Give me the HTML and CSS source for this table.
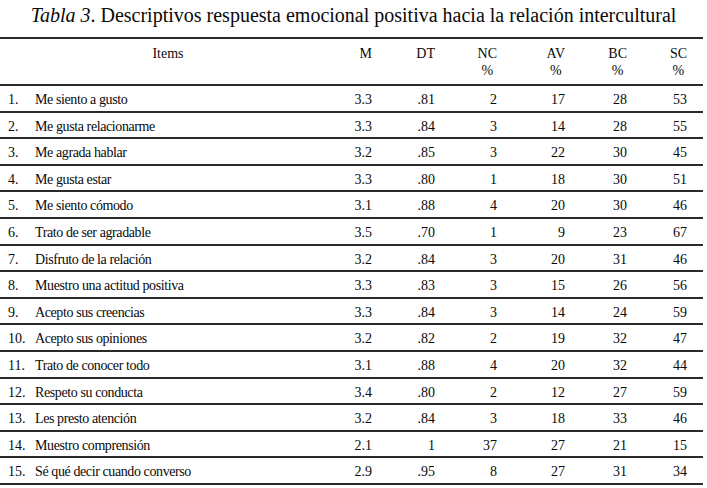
FILE: index.html
```html
<!DOCTYPE html>
<html lang="es">
<head>
<meta charset="utf-8">
<title>Tabla 3</title>
<link rel="stylesheet" href="styles.css">
</head>
<body>
<div class="page">
  <h1 class="caption"><em>Tabla 3</em>. Descriptivos respuesta emocional positiva hacia la relación intercultural</h1>
  <div class="table">
    <div class="row head">
      <div class="item-head">Items</div>
      <div class="num"><span class="h">M</span></div>
      <div class="num"><span class="h">DT</span></div>
      <div class="num"><span class="h">NC<br>%</span></div>
      <div class="num"><span class="h">AV<br>%</span></div>
      <div class="num"><span class="h">BC<br>%</span></div>
      <div class="num"><span class="h">SC<br>%</span></div>
    </div>
    <div class="row"><div class="item"><span class="n">1.</span>Me siento a gusto</div><div class="num">3.3</div><div class="num">.81</div><div class="num">2</div><div class="num">17</div><div class="num">28</div><div class="num">53</div></div>
    <div class="row"><div class="item"><span class="n">2.</span>Me gusta relacionarme</div><div class="num">3.3</div><div class="num">.84</div><div class="num">3</div><div class="num">14</div><div class="num">28</div><div class="num">55</div></div>
    <div class="row"><div class="item"><span class="n">3.</span>Me agrada hablar</div><div class="num">3.2</div><div class="num">.85</div><div class="num">3</div><div class="num">22</div><div class="num">30</div><div class="num">45</div></div>
    <div class="row"><div class="item"><span class="n">4.</span>Me gusta estar</div><div class="num">3.3</div><div class="num">.80</div><div class="num">1</div><div class="num">18</div><div class="num">30</div><div class="num">51</div></div>
    <div class="row"><div class="item"><span class="n">5.</span>Me siento cómodo</div><div class="num">3.1</div><div class="num">.88</div><div class="num">4</div><div class="num">20</div><div class="num">30</div><div class="num">46</div></div>
    <div class="row"><div class="item"><span class="n">6.</span>Trato de ser agradable</div><div class="num">3.5</div><div class="num">.70</div><div class="num">1</div><div class="num">9</div><div class="num">23</div><div class="num">67</div></div>
    <div class="row"><div class="item"><span class="n">7.</span>Disfruto de la relación</div><div class="num">3.2</div><div class="num">.84</div><div class="num">3</div><div class="num">20</div><div class="num">31</div><div class="num">46</div></div>
    <div class="row"><div class="item"><span class="n">8.</span>Muestro una actitud positiva</div><div class="num">3.3</div><div class="num">.83</div><div class="num">3</div><div class="num">15</div><div class="num">26</div><div class="num">56</div></div>
    <div class="row"><div class="item"><span class="n">9.</span>Acepto sus creencias</div><div class="num">3.3</div><div class="num">.84</div><div class="num">3</div><div class="num">14</div><div class="num">24</div><div class="num">59</div></div>
    <div class="row"><div class="item"><span class="n">10.</span>Acepto sus opiniones</div><div class="num">3.2</div><div class="num">.82</div><div class="num">2</div><div class="num">19</div><div class="num">32</div><div class="num">47</div></div>
    <div class="row"><div class="item"><span class="n">11.</span>Trato de conocer todo</div><div class="num">3.1</div><div class="num">.88</div><div class="num">4</div><div class="num">20</div><div class="num">32</div><div class="num">44</div></div>
    <div class="row"><div class="item"><span class="n">12.</span>Respeto su conducta</div><div class="num">3.4</div><div class="num">.80</div><div class="num">2</div><div class="num">12</div><div class="num">27</div><div class="num">59</div></div>
    <div class="row"><div class="item"><span class="n">13.</span>Les presto atención</div><div class="num">3.2</div><div class="num">.84</div><div class="num">3</div><div class="num">18</div><div class="num">33</div><div class="num">46</div></div>
    <div class="row"><div class="item"><span class="n">14.</span>Muestro comprensión</div><div class="num">2.1</div><div class="num">1</div><div class="num">37</div><div class="num">27</div><div class="num">21</div><div class="num">15</div></div>
    <div class="row"><div class="item"><span class="n">15.</span>Sé qué decir cuando converso</div><div class="num">2.9</div><div class="num">.95</div><div class="num">8</div><div class="num">27</div><div class="num">31</div><div class="num">34</div></div>
  </div>
</div>
</body>
</html>
```
FILE: styles.css
```css
html, body {
  margin: 0;
  padding: 0;
  background: #ffffff;
}
body {
  font-family: "Liberation Serif", "Times New Roman", serif;
  color: #0a0a0a;
}
.page {
  width: 707px;
}
.caption {
  margin: 0;
  padding-top: 3px;
  height: 37px;
  box-sizing: border-box;
  text-align: center;
  font-weight: normal;
  font-size: 20px;
  line-height: 24px;
}
.caption em {
  font-style: italic;
}
.table {
  width: 703px;
  border-top: 2px solid #2a2a2a;
}
.row {
  display: grid;
  grid-template-columns: 310px 62px 63px 62px 68px 62px 60px 16px;
  height: 24.6px;
  border-bottom: 2px solid #2a2a2a;
  font-size: 14px;
  line-height: 20px;
  align-items: start;
}
.row > div {
  padding-top: 4px;
}
.row.head {
  height: 45px;
  line-height: 17px;
}
.item-head {
  padding-left: 58px;
  width: 220px;
  text-align: center;
}
.row.head > div {
  padding-top: 6px;
}
.item {
  padding-left: 8px;
  letter-spacing: -0.4px;
  white-space: nowrap;
}
.n {
  display: inline-block;
  width: 27px;
  letter-spacing: 0;
}
.num {
  text-align: right;
}
.h {
  display: inline-block;
  text-align: center;
}
```
